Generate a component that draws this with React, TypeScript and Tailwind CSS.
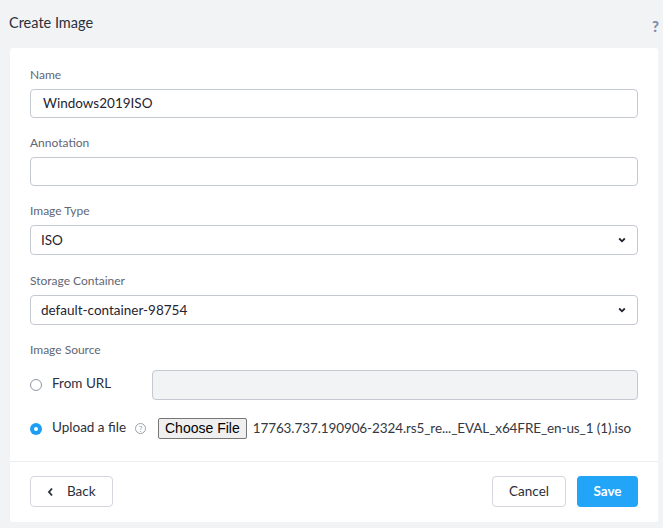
import React from "react";

function Chevron() {
  return (
    <svg width="8" height="6" viewBox="0 0 8 6" className="absolute right-[11px] top-1/2 -translate-y-1/2">
      <path d="M1.2 1.5 L4 4.3 L6.8 1.5" fill="none" stroke="#1f2330" strokeWidth="1.8" />
    </svg>
  );
}

function Label({ children }: { children: React.ReactNode }) {
  return <div className="text-[12px] leading-[14px] text-[#5f6675] mb-[7px]">{children}</div>;
}

export default function App() {
  return (
    <div className="w-[663px] h-[528px] bg-[#f2f3f5] overflow-hidden font-['Lato',sans-serif] text-[#232833]">
      <div className="h-[48px] flex items-center justify-between pl-[9px] pr-[4px] pb-[3px]">
        <div className="text-[14.5px] text-[#2b303a]">Create Image</div>
        <div className="text-[15px] font-black text-[#7d8fab] mt-[8px]">?</div>
      </div>
      <div className="ml-[10px] mr-[5px] bg-white rounded-[3px]">
        <div className="px-[20px] pt-[20px] pb-[22px]">
          <Label>Name</Label>
          <div className="h-[29px] border border-[#c4c8d1] rounded-[4px] flex items-center px-[12px] text-[13.5px] text-[#1f2430] mb-[18px]">
            Windows2019ISO
          </div>
          <Label>Annotation</Label>
          <div className="h-[29px] border border-[#c4c8d1] rounded-[4px] mb-[18px]" />
          <Label>Image Type</Label>
          <div className="relative h-[30px] border border-[#c4c8d1] rounded-[4px] flex items-center px-[10px] text-[13.5px] text-[#1f2430] mb-[19px]">
            ISO
            <Chevron />
          </div>
          <Label>Storage Container</Label>
          <div className="relative h-[30px] border border-[#c4c8d1] rounded-[4px] flex items-center px-[10px] text-[13.5px] text-[#1f2430] mb-[18px]">
            default-container-98754
            <Chevron />
          </div>
          <div className="text-[12px] leading-[14px] text-[#5f6675] mb-[13px]">Image Source</div>
          <div className="flex items-center h-[30px] mb-[18px]">
            <div className="w-[122px] flex items-center">
              <span className="w-[12px] h-[12px] rounded-full border border-[#8f96a3] mr-[10px]" />
              <span className="text-[13.5px] text-[#2b303a] -mt-[3px]">From URL</span>
            </div>
            <div className="flex-1 h-[30px] border border-[#c4c8d1] rounded-[4px] bg-[#f2f3f5]" />
          </div>
          <div className="flex items-center h-[21px]">
            <div className="w-[128px] shrink-0 flex items-center">
              <span className="w-[12px] h-[12px] rounded-full bg-[#1b9ef4] flex items-center justify-center mr-[10px]">
                <span className="w-[4px] h-[4px] rounded-full bg-white" />
              </span>
              <span className="text-[13.5px] text-[#2b303a] -mt-[3px]">Upload a file</span>
              <span className="ml-[9px] w-[11px] h-[11px] rounded-full border border-[#9aa0ab] text-[8px] leading-[8px] text-[#9aa0ab] flex items-center justify-center">?</span>
            </div>
            <div className="shrink-0 whitespace-nowrap h-[21px] px-[6px] border border-[#767676] rounded-[2px] bg-[#efefef] flex items-center text-[14px] font-['Liberation_Sans',sans-serif] text-black">
              Choose File
            </div>
            <span className="ml-[6px] text-[13.5px] text-[#333842] whitespace-nowrap tracking-[-0.1px]">
              17763.737.190906-2324.rs5_re..._EVAL_x64FRE_en-us_1 (1).iso
            </span>
          </div>
        </div>
        <div className="border-t border-[#eceef1] px-[20px] pt-[14px] pb-[15px] flex justify-between">
          <div className="h-[31px] w-[83px] border border-[#d3d6dc] rounded-[4px] flex items-center pl-[16px] text-[13.5px] text-[#2b303a]">
            <svg width="7" height="10" viewBox="0 0 7 10" className="mr-[13px]">
              <path d="M5 1.5 L2 5 L5 8.5" fill="none" stroke="#2b303a" strokeWidth="1.9" />
            </svg>
            Back
          </div>
          <div className="flex gap-[11px]">
            <div className="h-[31px] w-[74px] border border-[#d3d6dc] rounded-[4px] flex items-center justify-center text-[13.5px] text-[#2b303a]">
              Cancel
            </div>
            <div className="h-[31px] w-[61px] rounded-[4px] bg-[#22a5f7] flex items-center justify-center text-[13.5px] font-bold text-white">
              Save
            </div>
          </div>
        </div>
      </div>
    </div>
  );
}
